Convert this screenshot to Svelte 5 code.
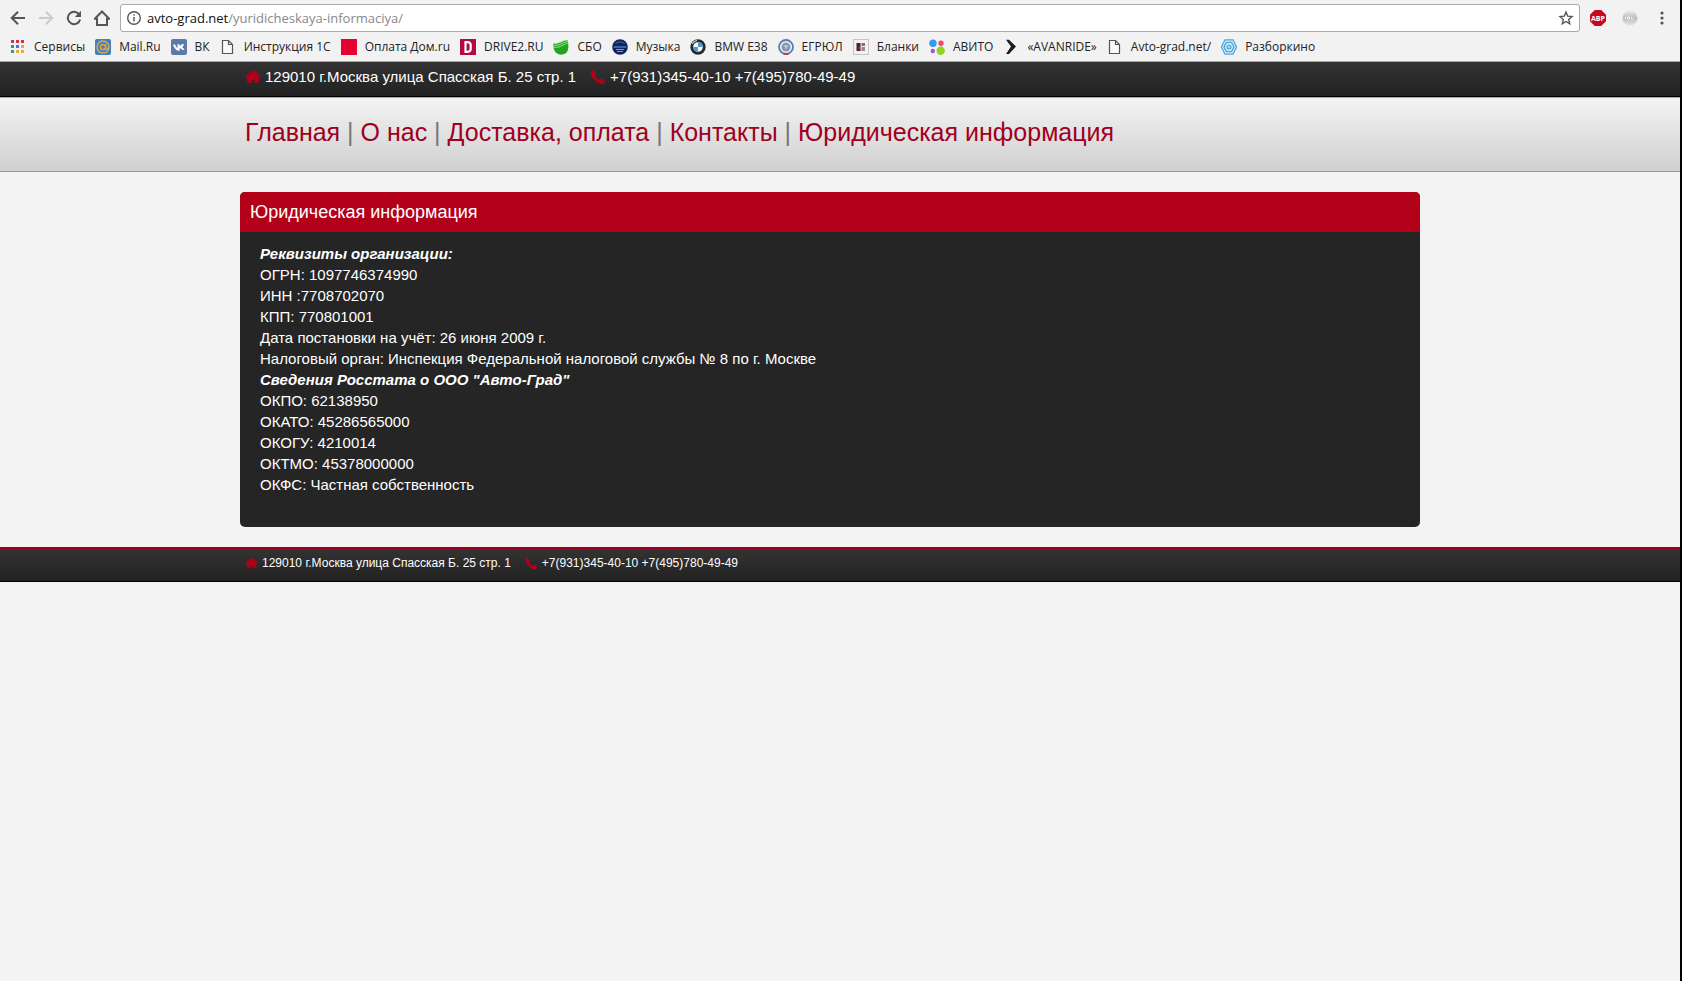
<script lang="ts">
  type Bookmark = { title: string; icon: string; };

  const bookmarks: Bookmark[] = [
    { title: "Сервисы", icon: "apps" },
    { title: "Mail.Ru", icon: "mail" },
    { title: "ВК", icon: "vk" },
    { title: "Инструкция 1С", icon: "page" },
    { title: "Оплата Дом.ru", icon: "dom" },
    { title: "DRIVE2.RU", icon: "drive" },
    { title: "СБО", icon: "sbo" },
    { title: "Музыка", icon: "music" },
    { title: "BMW E38", icon: "bmw" },
    { title: "ЕГРЮЛ", icon: "egrul" },
    { title: "Бланки", icon: "blanks" },
    { title: "АВИТО", icon: "avito" },
    { title: "«AVANRIDE»", icon: "avanride" },
    { title: "Avto-grad.net/", icon: "page" },
    { title: "Разборкино", icon: "razborkino" },
  ];

  const appColors = ["#d5304a", "#d5304a", "#d5304a", "#3f9a5a", "#3f78d8", "#e2ab3a", "#3f9a5a", "#e2ab3a", "#e2ab3a"];

  const menu = ["Главная", "О нас", "Доставка, оплата", "Контакты", "Юридическая информация"];

  const address = "129010 г.Москва улица Спасская Б. 25 стр. 1";
  const phones = "+7(931)345-40-10 +7(495)780-49-49";

  const sections = [
    {
      title: "Реквизиты организации:",
      lines: [
        "ОГРН: 1097746374990",
        "ИНН :7708702070",
        "КПП: 770801001",
        "Дата постановки на учёт: 26 июня 2009 г.",
        "Налоговый орган: Инспекция Федеральной налоговой службы № 8 по г. Москве",
      ],
    },
    {
      title: 'Сведения Росстата о ООО "Авто-Град"',
      lines: [
        "ОКПО: 62138950",
        "ОКАТО: 45286565000",
        "ОКОГУ: 4210014",
        "ОКТМО: 45378000000",
        "ОКФС: Частная собственность",
      ],
    },
  ];
</script>

{#snippet bookmarkIcon(name: string)}
  <svg class="favicon" viewBox="0 0 16 16" aria-hidden="true">
    {#if name === "apps"}
      {#each appColors as color, i}
        <rect x={1 + (i % 3) * 5} y={1 + Math.floor(i / 3) * 5} width="3" height="3" fill={color} />
      {/each}
    {:else if name === "mail"}
      <rect width="16" height="16" rx="2" fill="#3f7fc8" />
      <circle cx="8" cy="8" r="6" fill="none" stroke="#e8a63c" stroke-width="1.5" />
      <circle cx="8" cy="8" r="2.6" fill="none" stroke="#e8a63c" stroke-width="1.5" />
      <path d="M10.7 5.5v4q1.2 2 2.8-.5" fill="none" stroke="#e8a63c" stroke-width="1.4" />
    {:else if name === "vk"}
      <rect width="16" height="16" rx="2" fill="#5b7aa6" />
      <path d="M3 5.5q1.5 4.5 4.5 5.2V5.3M7.5 8.3q3 0 4.7-3M8 8q3 .2 4.7 2.8" fill="none" stroke="#fff" stroke-width="2" />
    {:else if name === "page"}
      <path d="M2.5 1.5h6l4 4v9h-10z M8.5 1.5v4h4" fill="#fafafa" stroke="#555" stroke-width="1.2" />
    {:else if name === "dom"}
      <rect width="16" height="16" fill="#e4002f" />
    {:else if name === "drive"}
      <rect width="16" height="16" fill="#b6083e" />
      <path d="M5.5 3.2h2.2q3 0 3 3v3.6q0 3-3 3H5.5z" fill="none" stroke="#fff" stroke-width="2.2" />
    {:else if name === "sbo"}
      <path d="M.3 4.5Q3 5 7 3.3T14.5 1Q18 15.5 8 15.7 0 15 .3 4.5z" fill="#22a51c" />
      <path d="M.5 4.5Q4 5 8 3T13.5 .8M.5 6.3Q5 7 9 4.5T15 2.3M.7 8.2Q6 9 10 6.2T15.6 4.3" fill="none" stroke="#b5e8a4" stroke-width=".8" />
    {:else if name === "music"}
      <circle cx="8" cy="8" r="7.8" fill="#10245c" />
      <path d="M1.5 8h13M4 10.5h8M5 12.5h6" stroke="#6ba2e5" stroke-width="1" />
      <path d="M3.5 4.5q4.5-3 9 0" fill="none" stroke="#325998" stroke-width="1.4" />
    {:else if name === "bmw"}
      <circle cx="8" cy="8" r="7.7" fill="#252a2e" />
      <circle cx="8" cy="8" r="4.8" fill="#fff" />
      <path d="M8 8V3.2A4.8 4.8 0 0 1 12.8 8zM8 8v4.8A4.8 4.8 0 0 1 3.2 8z" fill="#4c9bd3" />
      <path d="M2 5q1.5-3 5-3.7" fill="none" stroke="#c5cbd0" stroke-width="1.2" />
    {:else if name === "egrul"}
      <circle cx="8" cy="8" r="7" fill="#f2f2f2" stroke="#557db6" stroke-width="1.8" />
      <circle cx="8" cy="8" r="4.5" fill="#8797ad" />
      <path d="M5.8 6.5L8 8l2.2-1.5M8 6v4" stroke="#dde2e9" stroke-width=".9" fill="none" />
      <path d="M5.5 15h5" stroke="#c73434" stroke-width="1.6" />
    {:else if name === "blanks"}
      <rect x=".5" y=".5" width="15" height="15" fill="#f4f1f1" stroke="#c9c5c5" />
      <path d="M3.5 4h4v8h-4z" fill="#4b2327" />
      <path d="M8.5 4h3.5v3H8.5z" fill="#777" />
      <path d="M8.5 8h3.5v4H8.5z" fill="#93898a" />
      <path d="M5.5 8h2v2h-2z" fill="#be3c48" />
    {:else if name === "avito"}
      <circle cx="4" cy="4.3" r="3.7" fill="#3499f1" />
      <circle cx="12" cy="4.3" r="2.7" fill="#f04c63" />
      <circle cx="3.8" cy="12" r="2.2" fill="#a64fe0" />
      <circle cx="11.7" cy="11.7" r="4.2" fill="#8fd41e" />
    {:else if name === "avanride"}
      <path d="M3 .8h3L13 7.5 6 15H3l5-7.4z" fill="#1c1c1c" />
    {:else if name === "razborkino"}
      <path d="M4 .8h8L15.6 8 12 15.2H4L.4 8z" fill="#d8eefa" stroke="#4ca6de" stroke-width="1.3" />
      <path d="M5.4 3.4h5.2L13 8l-2.4 4.6H5.4L3 8z" fill="none" stroke="#4ca6de" stroke-width="1.4" />
      <circle cx="8" cy="8" r="2" fill="#a5d4ef" stroke="#4ca6de" stroke-width="1.1" />
    {/if}
  </svg>
{/snippet}

{#snippet contacts()}
  <span class="contact">
    <svg viewBox="0 0 16 16" aria-hidden="true">
      <path d="M8 .8L10.6 3V2h2.2v3L15.8 8 13.8 9.6V13q0 .8-.8.8H9.2V11H6.8v2.8H3q-.8 0-.8-.8V9.6L.2 8z" fill="#b00019" />
      <path d="M3.6 9L8 5.2 12.4 9" fill="none" stroke="#7a1420" stroke-width=".5" />
    </svg>
    {address}
  </span>
  <span class="contact">
    <svg viewBox="0 0 16 16" aria-hidden="true">
      <path d="M1.2 2.1L3.4 .8 6.3 4.3 5 6.5Q6.3 9.2 9.5 10.8L11.4 9.2 15.2 12 14.2 14.3Q12.8 15.6 9.8 14.6 3 12 1 5.5 .4 3 1.2 2.1z" fill="#b00019" />
    </svg>
    {phones}
  </span>
{/snippet}

<div class="window">
  <header class="browser">
    <div class="toolbar">
      <button aria-label="Назад">
        <svg viewBox="0 0 16 16"><path d="M15 8H2M8 1.7L1.7 8 8 14.3" /></svg>
      </button>
      <button aria-label="Вперёд" disabled>
        <svg viewBox="0 0 16 16"><path d="M1 8h13M8 1.7L14.3 8 8 14.3" /></svg>
      </button>
      <button aria-label="Обновить">
        <svg viewBox="0 0 16 16">
          <path d="M13.2 4.5A6.2 6.2 0 1 0 14.1 9.5" />
          <path d="M15 .8V7H8.8z" class="solid" />
        </svg>
      </button>
      <button aria-label="Домашняя страница">
        <svg viewBox="0 0 16 16"><path d="M.8 8.8L8 1.5l7.2 7.3H13V15H3V8.8z" /></svg>
      </button>
      <div class="address">
        <svg viewBox="0 0 16 16" aria-hidden="true">
          <circle cx="8" cy="8" r="6.3" />
          <path d="M8 7v4.5M8 4.2v1.6" />
        </svg>
        <a class="url" href="#top">avto-grad.net<span>/yuridicheskaya-informaciya/</span></a>
        <button aria-label="Добавить в закладки">
          <svg class="star" viewBox="0 0 16 16"><path d="M8 2l1.7 4.1 4.3.4-3.3 2.9 1 4.4L8 11.5l-3.7 2.3 1-4.4L2 6.5l4.3-.4z" /></svg>
        </button>
      </div>
      <div class="extensions">
        <button class="abp" aria-label="Adblock Plus"><b>ABP</b></button>
        <button aria-label="Расширение">
          <svg viewBox="0 0 16 16">
            <defs>
              <linearGradient id="ball" x2="0" y2="1">
                <stop offset="0" stop-color="#ececec" />
                <stop offset=".5" stop-color="#bdbdbd" />
                <stop offset="1" stop-color="#e4e4e4" />
              </linearGradient>
            </defs>
            <circle cx="8" cy="8" r="7.5" fill="url(#ball)" stroke="none" />
            <path d="M3.5 7v2M5.5 7h2v2h-2zM9.5 7v2h2" class="mark" />
          </svg>
        </button>
        <button aria-label="Меню">
          <svg viewBox="0 0 16 16">
            <circle class="solid" cx="8" cy="3" r="1.6" />
            <circle class="solid" cx="8" cy="8" r="1.6" />
            <circle class="solid" cx="8" cy="13" r="1.6" />
          </svg>
        </button>
      </div>
    </div>
    <nav class="bookmarks">
      {#each bookmarks as bookmark}
        <a href="#top">{@render bookmarkIcon(bookmark.icon)}{bookmark.title}</a>
      {/each}
    </nav>
  </header>

  <div class="topline">
    <div class="container">{@render contacts()}</div>
  </div>

  <nav class="menu">
    <div class="container">
      {#each menu as item, i}
        {#if i > 0}{" | "}{/if}<a href="#top">{item}</a>
      {/each}
    </div>
  </nav>

  <main class="container">
    <article class="panel">
      <h1>{menu[4]}</h1>
      <div class="panel-body">
        {#each sections as section}
          <h2>{section.title}</h2>
          {#each section.lines as line}
            <p>{line}</p>
          {/each}
        {/each}
      </div>
    </article>
  </main>

  <footer>
    <div class="container">{@render contacts()}</div>
  </footer>
</div>

<style>
  :global(body) {
    margin: 0;
    background: #f3f3f3;
  }

  .window {
    box-sizing: border-box;
    min-height: 100vh;
    border-right: 2px solid #000;
    font-family: "Liberation Sans", Arial, sans-serif;
    font-size: 15px;
    color: #fff;
  }

  a {
    text-decoration: none;
  }

  button {
    display: flex;
    padding: 0;
    border: 0;
    background: none;
  }

  svg {
    display: block;
    flex: none;
    width: 16px;
    height: 16px;
  }

  .browser {
    background: #f2f2f2;
    border-bottom: 1px solid #a5aaa5;
    font-family: "Open Sans", "Noto Sans", sans-serif;
    color: #222;
  }

  .toolbar {
    display: flex;
    align-items: center;
    gap: 12px;
    padding: 4px 10px 0;
  }

  .toolbar svg {
    fill: none;
    stroke: #555;
    stroke-width: 2;
  }

  .toolbar button:disabled svg {
    stroke: #ccc;
  }

  .toolbar .solid {
    fill: #555;
    stroke: none;
  }

  .toolbar .mark {
    stroke: #eee;
    stroke-width: 1;
  }

  .address {
    box-sizing: border-box;
    display: flex;
    flex: 1;
    align-items: center;
    gap: 5px;
    height: 28px;
    padding: 0 5px;
    margin-left: -2px;
    border: 1px solid #aaa;
    border-radius: 3px;
    background: #fff;
  }

  .address svg {
    stroke-width: 1.4;
  }

  .url {
    flex: 1;
    font-size: 13px;
    line-height: 20px;
    color: #111;
  }

  .url span {
    color: #888;
  }

  .extensions {
    display: flex;
    gap: 16px;
    margin-left: -2px;
  }

  .abp {
    align-items: center;
    justify-content: center;
    width: 16px;
    height: 16px;
    background: #c4091d;
    clip-path: polygon(30% 0, 70% 0, 100% 30%, 100% 70%, 70% 100%, 30% 100%, 0 70%, 0 30%);
    font: 7px "Open Sans", sans-serif;
    color: #fff;
  }

  .bookmarks {
    display: flex;
    gap: 10px;
    padding: 5px 10px 4px;
    font-size: 12px;
    line-height: 20px;
    white-space: nowrap;
  }

  .bookmarks a {
    display: flex;
    align-items: center;
    gap: 8px;
    color: #222;
  }

  .container {
    box-sizing: border-box;
    max-width: 1200px;
    margin: 0 auto;
    padding-right: 20px;
  }

  .topline {
    border-bottom: 1px solid #000;
    background: linear-gradient(#333, #222);
    line-height: 20px;
  }

  .topline .container,
  footer .container {
    display: flex;
    gap: 14px;
    padding: 5px 5px 9px;
  }

  .contact {
    display: flex;
    align-items: center;
    gap: 4px;
  }

  .menu {
    border-top: 1px solid #aaa;
    border-bottom: 1px solid #999;
    background: linear-gradient(#f3f3f3, #d0d0d0);
    font-size: 25px;
    line-height: 30px;
    color: #777;
  }

  .menu .container {
    padding: 19px 5px 24px;
  }

  .menu a {
    color: #a00020;
  }

  main {
    padding-top: 20px;
    padding-bottom: 20px;
  }

  .panel {
    overflow: hidden;
    border-radius: 5px;
    background: #252525;
  }

  h1 {
    margin: 0;
    padding: 10px;
    background: #b20019;
    font-size: 18px;
    font-weight: normal;
    line-height: 20px;
  }

  .panel-body {
    padding: 11px 20px 32px;
    line-height: 21px;
  }

  h2 {
    margin: 0;
    font-size: 15px;
    font-style: italic;
  }

  p {
    margin: 0;
  }

  footer {
    border-top: 2px solid #a00020;
    border-bottom: 1px solid #000;
    background: linear-gradient(#333, #222);
    font-size: 12px;
    line-height: 18px;
  }

  footer svg {
    width: 13px;
    height: 13px;
  }
</style>
